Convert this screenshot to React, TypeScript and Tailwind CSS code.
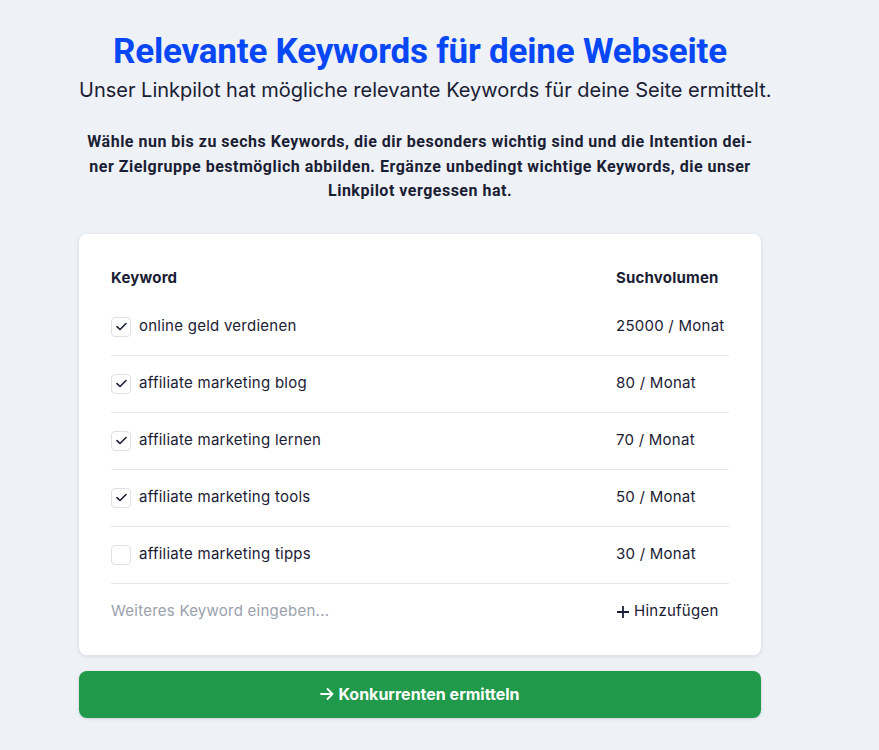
import React from "react";

const rows = [
  { k: "online geld verdienen", v: "25000 / Monat", c: true },
  { k: "affiliate marketing blog", v: "80 / Monat", c: true },
  { k: "affiliate marketing lernen", v: "70 / Monat", c: true },
  { k: "affiliate marketing tools", v: "50 / Monat", c: true },
  { k: "affiliate marketing tipps", v: "30 / Monat", c: false },
];

function Check({ on }: { on: boolean }) {
  return (
    <div className="w-[20px] h-[20px] rounded-[4px] border border-[#dde1e8] bg-white flex items-center justify-center shrink-0">
      {on && (
        <svg width="11" height="9" viewBox="0 0 11 9" fill="none">
          <path d="M1 4.6L4 7.5L10 1.5" stroke="#1a2033" strokeWidth="1.6" strokeLinecap="round" strokeLinejoin="round" />
        </svg>
      )}
    </div>
  );
}

export default function App() {
  return (
    <div className="min-h-screen bg-[#eef1f6] text-[#1a2033]" style={{ fontFamily: "Inter, 'Noto Sans', sans-serif" }}>
      <div className="w-[682px] ml-[79px] pt-[31px] pb-8 flex flex-col">
        <h1 className="text-center text-[35px] leading-[42px] font-bold text-[#0747f5] tracking-[-0.2px] whitespace-nowrap" style={{ fontFamily: "Roboto, Inter, sans-serif" }}>
          Relevante Keywords für deine Webseite
        </h1>
        <p className="text-center text-[20px] leading-[28px] mt-[3px] whitespace-nowrap">
          Unser Linkpilot hat mögliche relevante Keywords für deine Seite ermittelt.
        </p>
        <p className="text-center text-[16px] leading-[24.5px] font-bold mt-[26px] tracking-[0.5px] whitespace-nowrap" style={{ fontFamily: "Roboto, Inter, sans-serif" }}>
          Wähle nun bis zu sechs Keywords, die dir besonders wichtig sind und die Intention dei-
          <br />
          ner Zielgruppe bestmöglich abbilden. Ergänze unbedingt wichtige Keywords, die unser
          <br />
          Linkpilot vergessen hat.
        </p>
        <div className="mt-[30px] bg-white rounded-[8px] shadow-[0_1px_4px_rgba(20,30,60,0.12)] px-8 pt-[34px] pb-[15px]">
          <div className="flex items-center h-[22px] mb-[9px] text-[15px] font-bold tracking-[0.2px]">
            <div className="flex-1">Keyword</div>
            <div className="w-[113px] whitespace-nowrap">Suchvolumen</div>
          </div>
          {rows.map((r) => (
            <div key={r.k} className="flex items-center h-[57px] border-b border-[#e5e7ec] text-[15px] tracking-[0.25px]">
              <div className="flex-1 flex items-center gap-[8px]">
                <Check on={r.c} />
                <span>{r.k}</span>
              </div>
              <div className="w-[113px] whitespace-nowrap">{r.v}</div>
            </div>
          ))}
          <div className="flex items-center h-[56px] text-[15px] tracking-[0.25px]">
            <div className="flex-1 text-[#9aa1ad]">Weiteres Keyword eingeben...</div>
            <div className="w-[113px] flex items-center gap-[4px] whitespace-nowrap">
              <svg width="14" height="14" viewBox="0 0 14 14" fill="none">
                <path d="M7 1V13M1 7H13" stroke="#1a2033" strokeWidth="1.8" />
              </svg>
              <span>Hinzufügen</span>
            </div>
          </div>
        </div>
        <button className="mt-4 h-[47px] w-full rounded-[8px] bg-[#21994b] text-white text-[16px] font-bold flex items-center justify-center gap-[4px] shadow-[0_1px_3px_rgba(20,30,60,0.15)]">
          <svg width="14" height="14" viewBox="0 0 14 14" fill="none">
            <path d="M1 7H12.5M7.5 2L12.5 7L7.5 12" stroke="white" strokeWidth="1.8" strokeLinecap="round" strokeLinejoin="round" />
          </svg>
          <span>Konkurrenten ermitteln</span>
        </button>
      </div>
    </div>
  );
}
